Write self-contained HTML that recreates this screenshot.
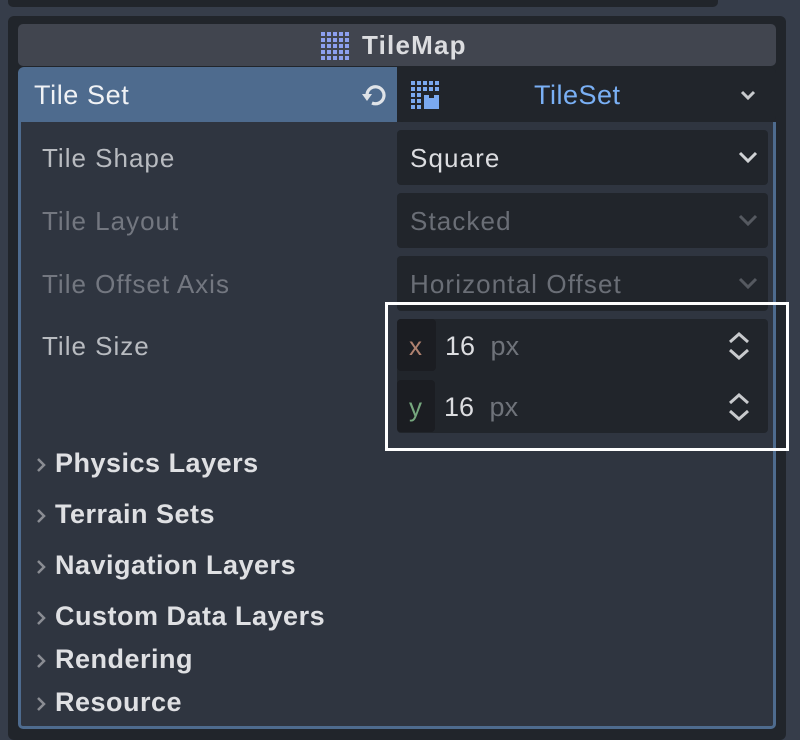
<!DOCTYPE html>
<html><head><meta charset="utf-8"><style>
*{margin:0;padding:0;box-sizing:border-box}
body{width:800px;height:740px;background:#363d4a;font-family:"Liberation Sans","Noto Sans CJK SC",sans-serif;position:relative;overflow:hidden}
.a{position:absolute}
.lbl{font-size:26px;letter-spacing:1px;color:#b8bbc0;left:42px}
.dis{color:#737780}
.dd{position:absolute;left:397px;width:371px;height:55px;background:#21252b;border-radius:4px;font-size:26px;letter-spacing:1.1px;color:#dcdde0;padding:13px 0 0 13px}
.dd.d{color:#6a6e76}
.chev{position:absolute;right:10px;top:20px}
.sec{position:absolute;left:55px;font-size:27px;letter-spacing:0.5px;font-weight:bold;color:#dfe0e3}
.sec svg{position:absolute;left:-20px;top:9px}
</style></head><body>
<div class="a" style="left:8px;top:0;width:710px;height:7px;background:#21252b;border-radius:0 0 5px 5px"></div>
<div class="a" style="left:8px;top:16px;width:778px;height:724px;background:#21252b;border-radius:6px"></div>
<div class="a" style="left:18px;top:24px;width:758px;height:42px;background:#41454f;border-radius:5px"></div>
<svg class="a" style="left:321px;top:32px" width="28" height="28">
<g fill="#8da0f0">
<path d="M0 0h4v4H0zM6 0h4v4H6zM12 0h4v4h-4zM18 0h4v4h-4zM24 0h4v4h-4z"/>
<path d="M0 6h4v4H0zM6 6h4v4H6zM12 6h4v4h-4zM18 6h4v4h-4zM24 6h4v4h-4z"/>
<path d="M0 12h4v4H0zM6 12h4v4H6zM12 12h4v4h-4zM18 12h4v4h-4zM24 12h4v4h-4z"/>
<path d="M0 18h4v4H0zM6 18h4v4H6zM12 18h4v4h-4zM18 18h4v4h-4zM24 18h4v4h-4z"/>
<path d="M0 24h4v4H0zM6 24h4v4H6zM12 24h4v4h-4zM18 24h4v4h-4zM24 24h4v4h-4z"/>
</g></svg>
<div class="a" style="left:362px;top:30px;font-size:26px;letter-spacing:1.2px;font-weight:bold;color:#dcdde0">TileMap</div>
<div class="a" style="left:18px;top:67px;width:379px;height:56px;background:#4e6b8e;border-radius:6px 0 0 0"></div>
<div class="a" style="left:34px;top:80px;font-size:27px;letter-spacing:0.6px;color:#f0f2f5">Tile Set</div>
<svg class="a" style="left:361px;top:81px" width="28" height="28"><path d="M6 14 A8.5 8.5 0 1 1 11 22" fill="none" stroke="#dfe3e8" stroke-width="3.2"/><path d="M1 13h10l-5 7z" fill="#dfe3e8"/></svg>
<div class="a" style="left:397px;top:67px;width:379px;height:55px;background:#21252b;border-radius:0 6px 6px 6px"></div>
<svg class="a" style="left:411px;top:81px" width="30" height="28"><g fill="#7aa9f0"><path d="M0 0h4v4H0zM6 0h4v4H6zM12 0h4v4h-4zM18 0h4v4h-4zM24 0h4v4h-4zM0 6h4v4H0zM6 6h4v4H6zM12 6h4v4h-4zM18 6h4v4h-4zM24 6h4v4h-4zM0 12h4v4H0zM6 12h4v4H6zM0 18h4v4H0zM6 18h4v4H6zM0 24h4v4H0zM6 24h4v4H6zM13 14h5v3h5v-3h5v14H13z"/></g></svg>
<div class="a" style="left:534px;top:80px;font-size:27px;letter-spacing:0.5px;color:#7ab0f5">TileSet</div>
<svg class="a" style="left:740px;top:90px" width="16" height="12"><path d="M2 2l6 6 6-6" fill="none" stroke="#c8cacd" stroke-width="3"/></svg>
<div class="a" style="left:18px;top:122px;width:758px;height:607px;background:#2f3540;border:3px solid #4e6b8e;border-top:none;border-radius:0 0 5px 5px"></div>
<div class="a lbl" style="top:143px">Tile Shape</div>
<div class="dd" style="top:130px">Square<svg class="chev" width="20" height="14"><path d="M2 3l8 8 8-8" fill="none" stroke="#d0d2d5" stroke-width="3"/></svg></div>
<div class="a lbl dis" style="top:206px">Tile Layout</div>
<div class="dd d" style="top:193px">Stacked<svg class="chev" width="20" height="14"><path d="M2 3l8 8 8-8" fill="none" stroke="#555960" stroke-width="3"/></svg></div>
<div class="a lbl dis" style="top:269px">Tile Offset Axis</div>
<div class="dd d" style="top:256px">Horizontal Offset<svg class="chev" width="20" height="14"><path d="M2 3l8 8 8-8" fill="none" stroke="#555960" stroke-width="3"/></svg></div>
<div class="a lbl" style="top:331px">Tile Size</div>
<div class="a" style="left:397px;top:319px;width:371px;height:114px;background:#21252b;border-radius:4px"></div>
<div class="a" style="left:397px;top:319px;width:39px;height:52px;background:#1b1d22;border-radius:4px"></div>
<div class="a" style="left:397px;top:380px;width:38px;height:52px;background:#1b1d22;border-radius:4px"></div>
<div class="a" style="left:409px;top:331px;font-size:26px;color:#b08270">x</div>
<div class="a" style="left:409px;top:392px;font-size:26px;color:#76a77e">y</div>
<div class="a" style="left:445px;top:331px;font-size:27px;color:#dcdde0">16 <span style="color:#6f737a;margin-left:8px">px</span></div>
<div class="a" style="left:444px;top:392px;font-size:27px;color:#dcdde0">16 <span style="color:#6f737a;margin-left:8px">px</span></div>
<svg class="a" style="left:727px;top:331px" width="24" height="30"><path d="M3 11l9-8 9 8M3 19l9 8 9-8" fill="none" stroke="#c8cacd" stroke-width="3"/></svg>
<svg class="a" style="left:727px;top:392px" width="24" height="30"><path d="M3 11l9-8 9 8M3 19l9 8 9-8" fill="none" stroke="#c8cacd" stroke-width="3"/></svg>
<div class="a" style="left:385px;top:302px;width:404px;height:149px;border:3px solid #ffffff"></div>
<div class="sec" style="top:448px"><svg width="12" height="16"><path d="M3 2l6 6-6 6" fill="none" stroke="#8a8d93" stroke-width="2.5"/></svg>Physics Layers</div>
<div class="sec" style="top:499px"><svg width="12" height="16"><path d="M3 2l6 6-6 6" fill="none" stroke="#8a8d93" stroke-width="2.5"/></svg>Terrain Sets</div>
<div class="sec" style="top:550px"><svg width="12" height="16"><path d="M3 2l6 6-6 6" fill="none" stroke="#8a8d93" stroke-width="2.5"/></svg>Navigation Layers</div>
<div class="sec" style="top:601px"><svg width="12" height="16"><path d="M3 2l6 6-6 6" fill="none" stroke="#8a8d93" stroke-width="2.5"/></svg>Custom Data Layers</div>
<div class="sec" style="top:644px"><svg width="12" height="16"><path d="M3 2l6 6-6 6" fill="none" stroke="#8a8d93" stroke-width="2.5"/></svg>Rendering</div>
<div class="sec" style="top:687px"><svg width="12" height="16"><path d="M3 2l6 6-6 6" fill="none" stroke="#8a8d93" stroke-width="2.5"/></svg>Resource</div>
</body></html>
